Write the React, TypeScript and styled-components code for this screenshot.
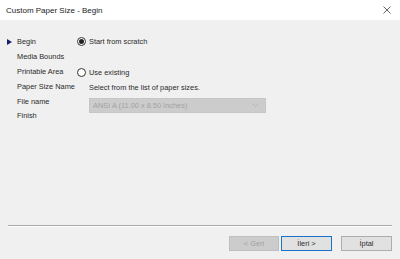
import React from "react";
import styled, { createGlobalStyle } from "styled-components";

const Global = createGlobalStyle`
  html, body { margin: 0; padding: 0; background: #f0f0f0; }
  * { box-sizing: border-box; }
`;

const Window = styled.div`
  width: 400px;
  height: 259px;
  background: #f0f0f0;
  display: flex;
  flex-direction: column;
  font-family: "Liberation Sans", Arial, sans-serif;
  font-size: 7.4px;
  color: #2a2a2a;
  overflow: hidden;
`;

const TitleBar = styled.div`
  height: 20px;
  background: #ffffff;
  display: flex;
  align-items: center;
  padding: 0 7px 0 6px;
`;

const Title = styled.span`
  font-size: 8px;
  color: #222;
  margin-top: 1px;
`;

const Close = styled.button`
  margin-left: auto;
  width: 12px;
  height: 12px;
  padding: 0;
  border: none;
  background: transparent;
  display: flex;
  align-items: center;
  justify-content: center;
`;

const Main = styled.div`
  flex: 1;
  display: flex;
  padding: 14.6px 0 0 7px;
`;

const Nav = styled.ul`
  list-style: none;
  margin: 0;
  padding: 0;
  width: 70px;
  display: flex;
  flex-direction: column;
`;

const NavItem = styled.li`
  height: 14.8px;
  display: flex;
  align-items: center;
`;

const Marker = styled.span<{ $active?: boolean }>`
  width: 10px;
  display: flex;
  align-items: center;
  visibility: ${(p) => (p.$active ? "visible" : "hidden")};
`;

const Content = styled.div`
  display: flex;
  flex-direction: column;
`;

const Row = styled.div<{ $gap?: number }>`
  height: 14.8px;
  display: flex;
  align-items: center;
  margin-top: ${(p) => p.$gap ?? 0}px;
`;

const Radio = styled.span<{ $checked?: boolean }>`
  width: 9px;
  height: 9px;
  border-radius: 50%;
  border: 1px solid #333;
  background: #fff;
  display: flex;
  align-items: center;
  justify-content: center;
  margin-right: 3px;
  &::after {
    content: "";
    width: 5px;
    height: 5px;
    border-radius: 50%;
    background: #222;
    display: ${(p) => (p.$checked ? "block" : "none")};
  }
`;

const Hint = styled.span`
  padding-left: 12px;
`;

const Select = styled.div`
  margin: 3px 0 0 12px;
  width: 177px;
  height: 15px;
  background: #cccccc;
  border: 1px solid #c6c6c6;
  display: flex;
  align-items: center;
  padding: 0 6px 0 3px;
  color: #a2a2a2;
`;

const Chevron = styled.svg`
  margin-left: auto;
`;

const Footer = styled.div`
  display: flex;
  flex-direction: column;
  padding: 0 8px 8px 8px;
`;

const Separator = styled.div`
  height: 2px;
  border-top: 1px solid #a8a8a8;
  border-bottom: 1px solid #ffffff;
`;

const Buttons = styled.div`
  display: flex;
  justify-content: flex-end;
  margin-top: 9px;
`;

const Button = styled.button<{ $variant?: "disabled" | "default" | "normal"; $ml?: number }>`
  width: ${(p) => (p.$variant === "disabled" ? 50 : 51)}px;
  height: 15px;
  margin-left: ${(p) => p.$ml ?? 0}px;
  padding: 0;
  font-family: "Liberation Sans", Arial, sans-serif;
  font-size: 7.4px;
  background: ${(p) => (p.$variant === "disabled" ? "#cccccc" : "#e1e1e1")};
  color: ${(p) => (p.$variant === "disabled" ? "#a0a0a0" : "#2a2a2a")};
  border: ${(p) =>
    p.$variant === "default"
      ? "1px solid #1a73c8"
      : p.$variant === "disabled"
      ? "1px solid #bfbfbf"
      : "1px solid #adadad"};
`;

const navItems = ["Begin", "Media Bounds", "Printable Area", "Paper Size Name", "File name", "Finish"];

export default function App() {
  return (
    <>
      <Global />
      <Window>
        <TitleBar>
          <Title>Custom Paper Size - Begin</Title>
          <Close aria-label="Close">
            <svg width="8" height="8" viewBox="0 0 8 8">
              <path d="M0.5 0.5 L7.5 7.5 M7.5 0.5 L0.5 7.5" stroke="#505050" strokeWidth="0.9" />
            </svg>
          </Close>
        </TitleBar>
        <Main>
          <Nav>
            {navItems.map((n, i) => (
              <NavItem key={n}>
                <Marker $active={i === 0}>
                  <svg width="5" height="6" viewBox="0 0 5 6">
                    <path d="M0 0 L5 3 L0 6 Z" fill="#1c1c6e" />
                  </svg>
                </Marker>
                {n}
              </NavItem>
            ))}
          </Nav>
          <Content>
            <Row>
              <Radio $checked />
              Start from scratch
            </Row>
            <Row $gap={15.8}>
              <Radio />
              Use existing
            </Row>
            <Row>
              <Hint>Select from the list of paper sizes.</Hint>
            </Row>
            <Select>
              ANSI A (11.00 x 8.50 Inches)
              <Chevron width="7" height="4" viewBox="0 0 7 4">
                <path d="M0.5 0.5 L3.5 3.5 L6.5 0.5" stroke="#b0b0b0" strokeWidth="0.8" fill="none" />
              </Chevron>
            </Select>
          </Content>
        </Main>
        <Footer>
          <Separator />
          <Buttons>
            <Button $variant="disabled" disabled>&lt; Geri</Button>
            <Button $variant="default" $ml={2}>İleri &gt;</Button>
            <Button $variant="normal" $ml={9}>İptal</Button>
          </Buttons>
        </Footer>
      </Window>
    </>
  );
}
